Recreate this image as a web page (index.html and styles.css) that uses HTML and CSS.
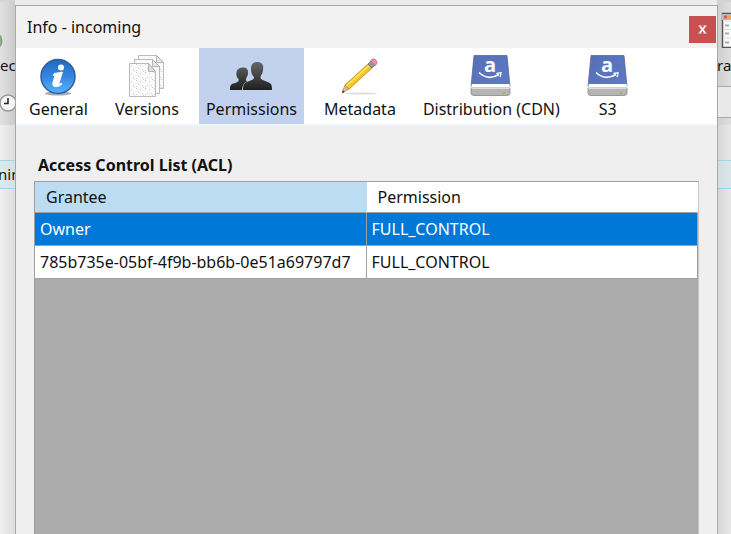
FILE: index.html
```html
<!DOCTYPE html>
<html lang="en">
<head>
<meta charset="utf-8">
<title>Info - incoming</title>
<link rel="stylesheet" href="styles.css">
</head>
<body>
<div class="browser">
  <div class="side side-left">
    <div class="bar">
      <svg class="connect" width="15" height="48" viewBox="0 0 15 48"><circle cx="-8" cy="41" r="10" fill="#79b574" stroke="#8c9a8b"/></svg>
      <span class="bar-label">ec</span>
      <svg class="clock" width="15" height="22" viewBox="0 0 15 22"><circle cx="8" cy="11" r="8" fill="#f5f5f5" stroke="#999" stroke-width="1.5"/><path d="M8 6v5.500H4" fill="none" stroke="#222" stroke-width="1.500"/></svg>
    </div>
    <div class="row">nin</div>
  </div>
  <div class="side side-right">
    <div class="bar">
      <svg class="panel" width="14" height="48" viewBox="0 0 14 48"><path d="M15 13.500H5.500V47.500H15" fill="#f8f8f8" stroke="#555" stroke-width="1.500"/><path d="M5 14h10v6H5z" fill="#b9b9b9"/><circle cx="8.500" cy="17" r="1.800" fill="#f2545b"/><circle cx="13" cy="17" r="1.800" fill="#f5a52c"/><path d="M8 25.500h4M8 33.500h4M8 42.500h4" stroke="#aaa" stroke-width="2"/><path d="M6 21h9M6 29.500h9M6 38h9" stroke="#ddd"/></svg>
      <span class="bar-label">ra</span>
      <div class="field"></div>
    </div>
    <div class="row"></div>
  </div>
</div>

<main class="dialog">
  <header class="title">
    <h1>Info - incoming</h1>
    <button class="close" type="button" aria-label="Close"><svg width="9" height="9" viewBox="0 0 9 9"><path d="M2 1.500l5 6M7 1.500l-5 6" stroke="#fff" stroke-width="1.700"/><path d="M.5 1h3M5.500 1h3M.5 8h3M5.500 8h3" stroke="#fff" stroke-width="1"/></svg></button>
  </header>
  <nav class="tabs">
    <button class="tab" type="button">
      <svg width="42" height="42" viewBox="0 0 42 42"><defs><linearGradient id="blue" x2="0" y2="1"><stop stop-color="#2368bd"/><stop offset=".5" stop-color="#3487e0"/><stop offset="1" stop-color="#55b2ff"/></linearGradient></defs><ellipse cx="21" cy="38.500" rx="13" ry="2" fill="#777" opacity=".6"/><circle cx="21" cy="21.500" r="17" fill="url(#blue)" stroke="#315f9d" stroke-width="1.500"/><circle cx="24" cy="12.500" r="3" fill="#fff"/><path d="M17 18.500l8.500-1.500-3.500 11.500q-.4 1.500 2.500-.2l.4 1q-3 2.900-6.500 2.400-3.500-.4-2.500-4l2-7-1.600-.2z" fill="#fff" stroke="#fff" stroke-width=".8"/></svg>
      <span>General</span>
    </button>
    <button class="tab" type="button">
      <svg width="42" height="42" viewBox="0 0 42 42"><defs><pattern id="specks" width="9" height="8" patternUnits="userSpaceOnUse"><path d="M1 1.500h1M5 2.500h1M3 5.500h1M7 6.500h1M8 .5h1M1 7.500h1" stroke="#ccc"/></pattern></defs><g stroke="#aaa" stroke-width=".8"><path d="M12.500 .5h18l7 7v26h-25z" fill="#fafafa"/><path d="M30.500 .5v7h7z" fill="#e4e4e4"/><path d="M8.500 4.500h18l7 7v27h-25z" fill="#fafafa"/><path d="M26.500 4.500v7h7z" fill="#e4e4e4"/><path d="M3.500 8.500h19l7 8v25h-26z" fill="#fbfbfb"/><path d="M22.500 8.500v8h7z" fill="#ddd"/></g><path d="M4 9h18v8h7v24H4zM34 12h3v22h-3z" fill="url(#specks)"/></svg>
      <span>Versions</span>
    </button>
    <button class="tab selected" type="button">
      <svg width="42" height="42" viewBox="0 0 42 42"><defs><linearGradient id="dark" gradientUnits="userSpaceOnUse" x1="0" y1="7" x2="0" y2="36"><stop stop-color="#666"/><stop offset="1" stop-color="#1c1c1c"/></linearGradient></defs><g fill="url(#dark)"><path d="M13 12.500c3.500 0 5.500 2 5 5.500 0 3-1.500 4-2 6 0 2 .5 2 1 2.500-3 1.500-4.500 3.500-5 8.500H0c0-5 1-6 5-7 3-1 4-1.500 3.500-4-2-2-2.500-4-2-7 .5-3 3-4.500 6.500-4.500z"/><path d="M27 7c5 0 7 3 6 8-.3 4-2 5-2.500 7 0 3 3 3 7 5 4 1.200 4.500 3 4.500 8H13c0-5 1-7 5-8.500 4-1.500 6-2 6-4.500-2-2-3-4-3-8s2-7 6-7z"/></g></svg>
      <span>Permissions</span>
    </button>
    <button class="tab" type="button">
      <svg width="42" height="42" viewBox="0 0 42 42"><ellipse cx="22" cy="38.500" rx="16" ry="1" fill="#aaa" opacity=".4"/><path d="M3 38l3-8 4 4z" fill="#e9b78e" stroke="#a87551" stroke-width=".7"/><path d="M3 38l1-2.700 1.700 1.700z" fill="#333"/><path d="M6 30L29 9l4 4-23 21z" fill="#f8c919" stroke="#b78310" stroke-width=".8"/><path d="M7.500 31L30 10.500" stroke="#ffe57c" stroke-width="1.200"/><path d="M29 9l3-3 4 4-3 3z" fill="#999" stroke="#666" stroke-width=".8"/><path d="M31.500 5.500q3-3 5.500-.5t-.5 5.500z" fill="#ed91a3" stroke="#bd7180" stroke-width=".7"/></svg>
      <span>Metadata</span>
    </button>
    <button class="tab" type="button">
      <svg width="42" height="42" viewBox="0 0 42 42"><use href="#disk"/><text x="20" y="17" class="mark">a</text></svg>
      <span>Distribution (CDN)</span>
    </button>
    <button class="tab" type="button">
      <svg width="42" height="42" viewBox="0 0 42 42"><defs><linearGradient id="disk-blue" x2="1" y2="1"><stop stop-color="#5570b8"/><stop offset="1" stop-color="#5f7ac4"/></linearGradient></defs><g id="disk"><path d="M4 .5h33l3 31H1z" fill="url(#disk-blue)" stroke="#5a6a94" stroke-width=".8"/><path d="M2 29h37.500l.5 3.500H1z" fill="#fff"/><path d="M1 33h39v5q0 2.500-3 2.500H4q-3 0-3-2.500z" fill="#b5b5b5" stroke="#888" stroke-width=".8"/><path d="M1.500 33.500h38" stroke="#ddd"/><circle cx="34" cy="38" r="1" fill="#9abb1b"/><path d="M9 17.500q9 8.500 20 2" fill="none" stroke="#fff" stroke-width="1.600"/><path d="M26.500 18.500l4.500-.8-.8 4.500" fill="none" stroke="#fff" stroke-width="1.300"/></g><text x="20" y="17" class="mark">a</text></svg>
      <span>S3</span>
    </button>
  </nav>
  <section class="content">
    <h2 id="acl">Access Control List (ACL)</h2>
    <div class="grid">
      <table aria-labelledby="acl">
        <thead><tr><th class="sorted">Grantee</th><th>Permission</th></tr></thead>
        <tbody>
          <tr class="active"><td>Owner</td><td>FULL_CONTROL</td></tr>
          <tr><td>785b735e-05bf-4f9b-bb6b-0e51a69797d7</td><td>FULL_CONTROL</td></tr>
        </tbody>
      </table>
    </div>
  </section>
</main>
</body>
</html>
```
FILE: styles.css
```css
* { box-sizing: border-box; }
body {
  margin: 0;
  height: 100vh;
  overflow: hidden;
  padding: 5px 13px 0 15px;
  background: #ececec;
  color: #111;
  font: 16px/22px "Noto Sans", "Open Sans", sans-serif;
}
svg { display: block; flex: none; }

.browser {
  position: absolute;
  inset: 0;
  display: flex;
  justify-content: space-between;
}
.side { white-space: nowrap; }
.side-left { width: 15px; background: linear-gradient(90deg, #f0f0f0, #dedede); }
.side-right { width: 14px; background: linear-gradient(90deg, #d6d6d6, #e8e8e8); }
.bar {
  height: 125px;
  border-top: 2px solid #d4d4d4;
  background: linear-gradient(90deg, #e2e2e2, #cbcbcb);
}
.side-right .bar { background: linear-gradient(90deg, #cfcfcf, #dedede); }
.bar svg { margin-top: -2px; }
.bar-label { display: block; height: 22px; margin-top: 6px; font-size: 15px; }
.bar .clock { margin-top: 16px; }
.field {
  height: 32px;
  margin-top: 10px;
  border: solid #aaa;
  border-width: 1px 0;
  background: #e9e9e9;
}
.row {
  height: 29px;
  margin-top: 35px;
  border: solid #a1d4e8;
  border-width: 1px 0;
  background: rgba(205, 228, 232, 0.5);
  text-indent: -2px;
  font-size: 15px;
  line-height: 26px;
}

.dialog {
  position: relative;
  height: 100%;
  display: flex;
  flex-direction: column;
  border: 1px solid #a8a8a8;
  border-bottom: 0;
  background: #efefef;
}
.title {
  display: flex;
  justify-content: space-between;
  height: 42px;
  padding-left: 11px;
  background: #f2f2f2;
}
h1, h2 { margin: 0; font-size: 16px; }
h1 { font-weight: 400; line-height: 42px; }
.close {
  display: grid;
  place-items: center;
  width: 27px;
  height: 27px;
  margin: 10px 1px 0 0;
  padding: 0;
  border: 0;
  background: #c75050;
}

.tabs {
  display: flex;
  gap: 13px;
  height: 78px;
  padding-left: 6px;
  border-bottom: 2px solid #f0f5fc;
  background: #fff;
}
.tab {
  display: flex;
  flex-direction: column;
  align-items: center;
  gap: 1px;
  padding: 7px 7px 0;
  border: 0;
  background: transparent;
  color: inherit;
  font: inherit;
  white-space: nowrap;
}
.tab.selected { background: #c2d2ee; }
.mark { fill: #fff; font: bold 20px "Open Sans", sans-serif; text-anchor: middle; }

.content {
  flex: 1;
  display: flex;
  flex-direction: column;
  gap: 5px;
  min-height: 0;
  padding: 28px 18px 0;
}
h2 { padding-left: 4px; }
.grid {
  flex: 1;
  border: 1px solid #a0a0a0;
  border-right-color: #c8c8c8;
  border-bottom: 0;
  background: #ababab;
}
table {
  width: 100%;
  table-layout: fixed;
  border-collapse: separate;
  border-spacing: 0;
}
th, td {
  height: 33px;
  padding: 0 5px;
  border: solid #a0a0a0;
  border-width: 0 1px 1px 0;
  background: #fff;
  text-align: left;
  font-weight: 400;
}
th { height: 31px; padding: 0 11px; border-right-color: #fff; }
th:first-child { width: 50%; }
th.sorted { border-right-color: #bcdcf4; background: #bcdcf4; }
.active td { background: #0078d7; color: #fff; }
```
